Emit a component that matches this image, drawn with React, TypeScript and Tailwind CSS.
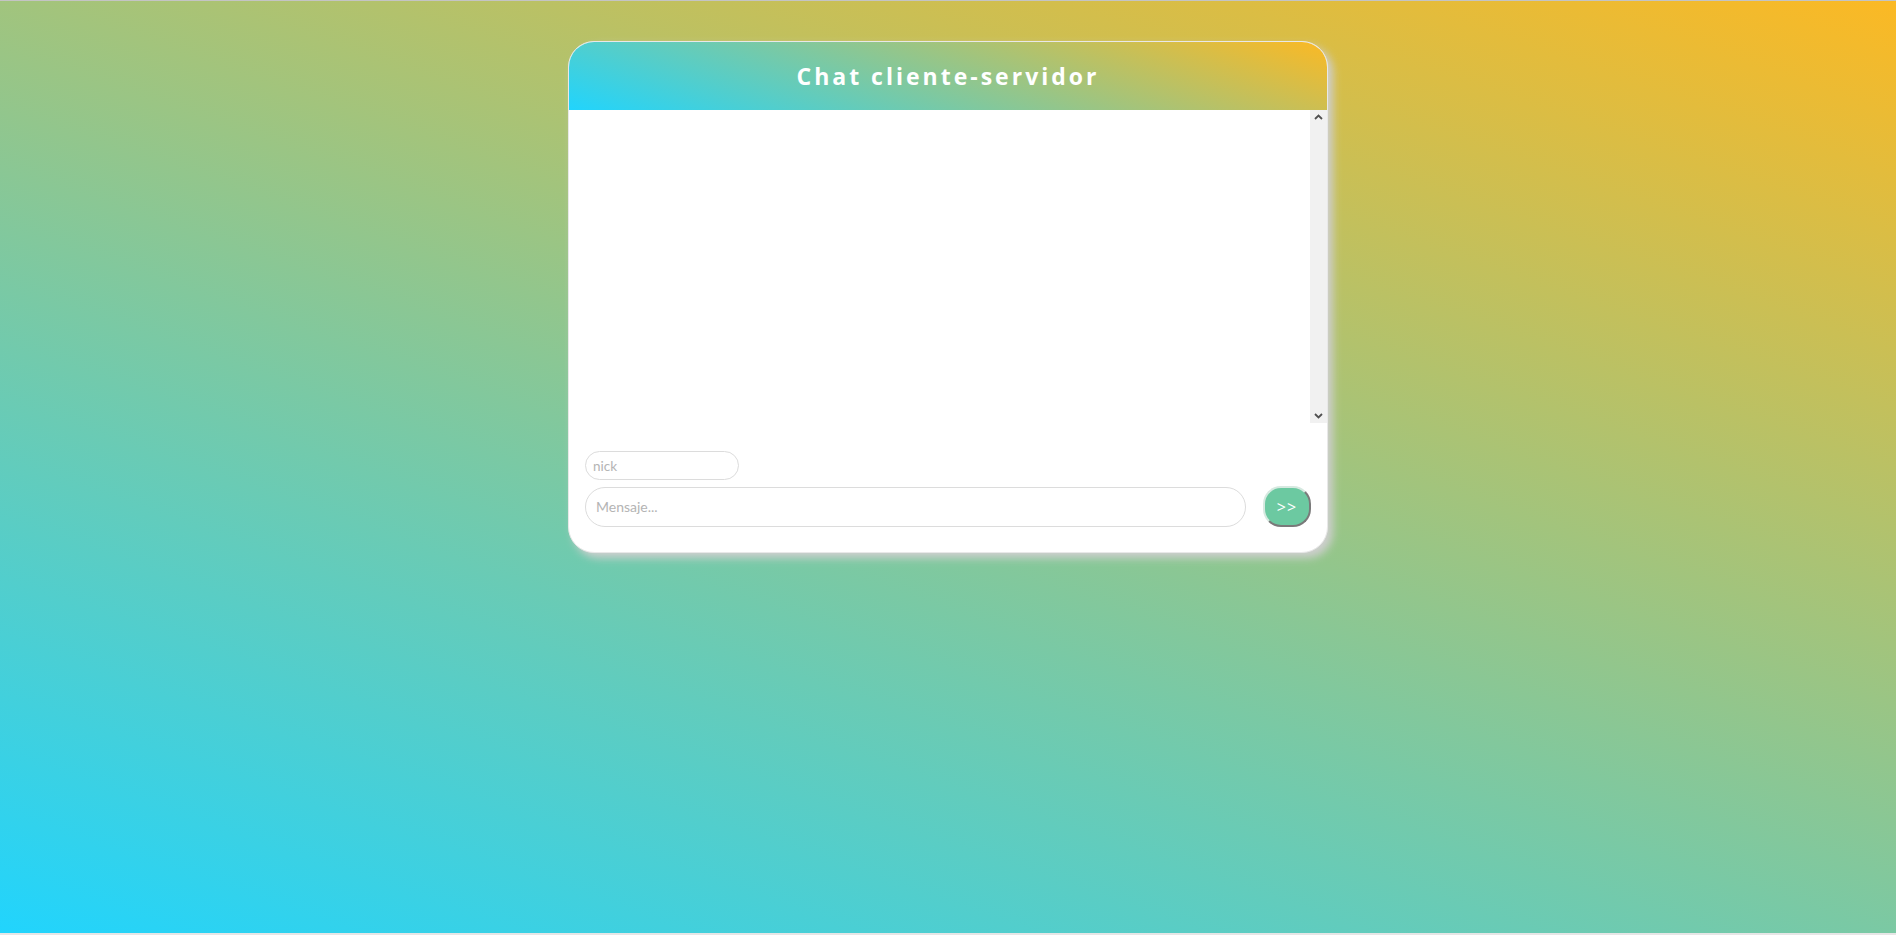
import { useState } from "react";

type Message = {
  nick: string;
  text: string;
};

function Chevron({ up }: { up?: boolean }) {
  return (
    <svg width="9" height="6" viewBox="0 0 9 6" className="block">
      <path
        d={up ? "M1 5 L4.5 1.5 L8 5" : "M1 1 L4.5 4.5 L8 1"}
        fill="none"
        stroke="#505050"
        strokeWidth="1.8"
      />
    </svg>
  );
}

export default function App() {
  const [messages, setMessages] = useState<Message[]>([]);
  const [nick, setNick] = useState("");
  const [text, setText] = useState("");

  function handleSend(e: React.FormEvent) {
    e.preventDefault();
    if (!text.trim()) return;
    setMessages([...messages, { nick: nick || "anónimo", text }]);
    setText("");
  }

  return (
    <div className="h-screen box-border border-t border-t-[#c4c4c4] border-b-2 border-b-[#e6e6e6] bg-[linear-gradient(19deg,#21d4fd_0%,#fbb924_100%)] pt-[40px] font-['Lato','Open_Sans',sans-serif]">
      <div className="mx-auto w-[760px] overflow-hidden rounded-[26px] border border-[#e8e8e8] bg-white shadow-[5px_5px_8px_#cfcfcf]">
        <header className="flex h-[68px] items-center justify-center bg-[linear-gradient(19deg,#21d4fd_0%,#fbb924_100%)]">
          <h1 className="font-['Open_Sans',sans-serif] text-[23px] font-bold tracking-[3px] text-white">
            Chat cliente-servidor
          </h1>
        </header>

        <div className="flex h-[313px]">
          <div className="flex-1 overflow-hidden px-4 py-2 text-sm text-gray-700">
            {messages.map((m, i) => (
              <div key={i} className="py-1">
                <span className="font-bold">{m.nick}: </span>
                {m.text}
              </div>
            ))}
          </div>
          <div className="flex w-[17px] flex-col items-center justify-between bg-[#f1f1f1] py-[4px]">
            <Chevron up />
            <Chevron />
          </div>
        </div>

        <form onSubmit={handleSend} className="px-4 pt-[28px] pb-[25px]">
          <input
            type="text"
            value={nick}
            onChange={(e) => setNick(e.target.value)}
            placeholder="nick"
            className="block h-[29px] w-[154px] rounded-full border border-[#dcdcdc] px-[7px] text-[13.5px] text-gray-600 outline-none placeholder:text-[#b4b4b4]"
          />
          <div className="mt-[6px] flex items-center">
            <input
              type="text"
              value={text}
              onChange={(e) => setText(e.target.value)}
              placeholder="Mensaje..."
              className="h-[40px] w-[661px] rounded-full border border-[#dcdcdc] px-[10px] text-[14px] text-gray-600 outline-none placeholder:text-[#b4b4b4]"
            />
            <button
              type="submit"
              className="ml-auto h-[41px] w-[48px] rounded-[18px] border-2 border-t-[#d6e9e0] border-l-[#d6e9e0] border-r-[#7a7a7a] border-b-[#7a7a7a] bg-[#6cc9a1] font-['Open_Sans',sans-serif] text-[16px] tracking-[1px] text-white"
            >
              &gt;&gt;
            </button>
          </div>
        </form>
      </div>
    </div>
  );
}
